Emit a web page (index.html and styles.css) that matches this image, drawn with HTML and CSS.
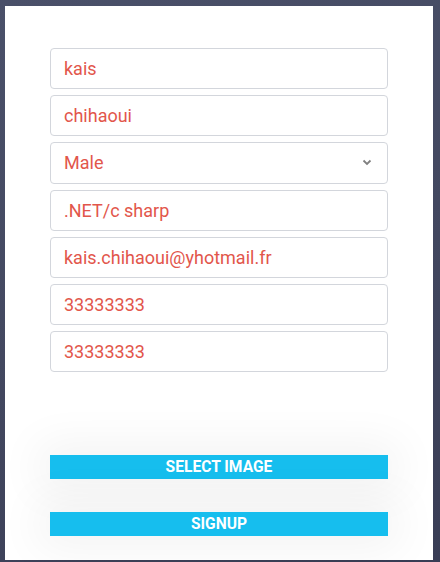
FILE: index.html
```html
<!DOCTYPE html>
<html>
<head>
<meta charset="utf-8">
<link rel="stylesheet" href="styles.css">
</head>
<body>
<div class="card">
  <form class="form">
    <div class="fields">
      <input class="field" type="text" value="kais">
      <input class="field" type="text" value="chihaoui">
      <div class="select-wrap">
        <select class="field select">
          <option>Male</option>
          <option>Female</option>
        </select>
        <svg class="chevron" width="10" height="7" viewBox="0 0 10 7"><path d="M1.5 1.5 L5 5 L8.5 1.5" fill="none" stroke="#808080" stroke-width="1.8"/></svg>
      </div>
      <input class="field" type="text" value=".NET/c sharp">
      <input class="field" type="text" value="kais.chihaoui@yhotmail.fr">
      <input class="field" type="text" value="33333333">
      <input class="field" type="text" value="33333333">
    </div>
    <div class="actions">
      <button type="button" class="btn">SELECT IMAGE</button>
      <button type="button" class="btn">SIGNUP</button>
    </div>
  </form>
</div>
</body>
</html>
```
FILE: styles.css
```css
html, body {
  margin: 0;
  padding: 0;
  height: 100%;
}
body {
  background: linear-gradient(160deg, #4a5069 0%, #434860 50%, #393d55 100%);
  font-family: Roboto, "Liberation Sans", sans-serif;
  overflow: hidden;
}
.card {
  margin: 6px 0 0 5px;
  width: 428px;
  height: 554px;
  background: #ffffff;
  box-sizing: border-box;
  padding: 42px 45px 0 45px;
}
.form {
  display: flex;
  flex-direction: column;
}
.fields {
  display: flex;
  flex-direction: column;
  gap: 6px;
}
.field {
  box-sizing: border-box;
  width: 338px;
  height: 41.2px;
  border: 1px solid #d3d6dc;
  border-radius: 4px;
  padding: 0 13px;
  font-family: Roboto, "Liberation Sans", sans-serif;
  font-size: 18px;
  color: #e2564b;
  background: #fff;
  outline: none;
}
.select-wrap {
  position: relative;
}
.select {
  -webkit-appearance: none;
  appearance: none;
  display: block;
}
.chevron {
  position: absolute;
  right: 16px;
  top: 17px;
}
.actions {
  margin-top: 83px;
  display: flex;
  flex-direction: column;
  gap: 33px;
}
.btn {
  height: 24px;
  width: 338px;
  border: none;
  background: #16beee;
  color: #fff;
  font-family: Roboto, "Liberation Sans", sans-serif;
  font-weight: 700;
  font-size: 15.6px;
  padding: 0;
  box-shadow: 0 0 45px 12px rgba(0, 0, 0, 0.05);
}
```
